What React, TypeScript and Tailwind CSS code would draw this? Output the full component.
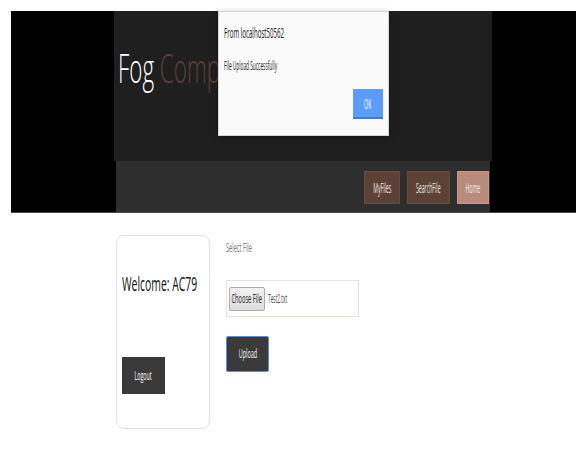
import type { ReactNode } from "react";

// narrow text helper: the page font is rendered condensed
function Narrow({
  children,
  origin = "left",
  scale = "scale-x-[0.45]",
}: {
  children: ReactNode;
  origin?: "left" | "center";
  scale?: string;
}) {
  return (
    <span
      className={`inline-block whitespace-nowrap ${scale} ${
        origin === "left" ? "origin-left" : "origin-center"
      }`}
    >
      {children}
    </span>
  );
}

function NavButton({ label, width, light }: { label: string; width: string; light?: boolean }) {
  return (
    <button
      className={`${width} h-[33px] flex items-center justify-center border text-[14px] text-[#f1e6e2] ${
        light ? "bg-[#b98b7f] border-[#c49a8f]" : "bg-[#5c4136] border-[#684a3e]"
      }`}
    >
      <Narrow origin="center" scale="scale-x-[0.37]">
        {label}
      </Narrow>
    </button>
  );
}

export default function App() {
  return (
    <div className="relative min-h-[452px] bg-white font-['Open_Sans',sans-serif] overflow-hidden">
      {/* header band */}
      <div className="pt-[11px] pl-[11px]">
        <div className="h-[202px] bg-black border-b border-[#4a4a4a] pl-[103px]">
          <div className="w-[378px]">
            <div className="h-[150px] bg-[#1f1f1f] pl-[4px] pt-[37px] overflow-hidden">
              <div className="text-[40px] leading-none font-light">
                <Narrow scale="scale-x-[0.56]">
                  <span className="text-white">Fog </span>
                  <span className="text-[#5c4136]">Computing</span>
                </Narrow>
              </div>
            </div>
            <div className="mx-[2px] h-[51px] bg-[#2e2e2e] flex justify-end items-start gap-[7px] pt-[10px] pr-[1px]">
              <NavButton label="MyFiles" width="w-[36px]" />
              <NavButton label="SearchFile" width="w-[43px]" />
              <NavButton label="Home" width="w-[32px]" light />
            </div>
          </div>
        </div>
      </div>

      {/* content */}
      <div className="flex gap-4 pl-[116px] pt-[22px]">
        <div className="w-[94px] h-[194px] rounded-lg border border-[#e3e3e3] pl-[5px] pt-[36px]">
          <div className="text-[20px] leading-6 text-[#111]">
            <Narrow scale="scale-x-[0.52]">Welcome: AC79</Narrow>
          </div>
          <button className="mt-[61px] w-[43px] h-[37px] bg-[#3a3a3a] text-white text-[13px] flex items-center justify-center">
            <Narrow origin="center" scale="scale-x-[0.41]">
              Logout
            </Narrow>
          </button>
        </div>

        <div className="pt-[5px]">
          <div className="text-[12px] leading-4 text-[#777]">
            <Narrow scale="scale-x-[0.47]">Select File</Narrow>
          </div>
          <div className="mt-[24px] w-[133px] h-[37px] border border-[#e6e4da] flex items-center pl-[2px] gap-[3px]">
            <span className="w-[36px] h-[24px] rounded-[2px] border border-[#acacac] bg-gradient-to-b from-[#f2f2f2] to-[#dcdcdc] text-[13px] text-[#222] flex items-center justify-center">
              <Narrow origin="center" scale="scale-x-[0.44]">
                Choose File
              </Narrow>
            </span>
            <span className="text-[12px] text-[#444]">
              <Narrow scale="scale-x-[0.4]">Test2.txt</Narrow>
            </span>
          </div>
          <button className="mt-[19px] w-[43px] h-[36px] rounded-[2px] bg-[#3a3a3a] border border-[#5b8ad6] text-white text-[13px] flex items-center justify-center">
            <Narrow origin="center" scale="scale-x-[0.42]">
              Upload
            </Narrow>
          </button>
        </div>
      </div>

      {/* alert dialog */}
      <div className="absolute left-[218px] top-[11px] w-[171px] h-[125px] bg-[#fafafa] border border-[#d6d6d6] shadow-[0_2px_6px_rgba(0,0,0,0.35)] flex flex-col pl-[5px] pr-[5px] pt-[11px] pb-[16px]">
        <div className="text-[14px] leading-[20px] text-[#222] overflow-hidden">
          <Narrow scale="scale-x-[0.44]">From localhost50562</Narrow>
        </div>
        <div className="mt-[15px] text-[12px] leading-[16px] text-[#222] overflow-hidden">
          <Narrow scale="scale-x-[0.4]">File Upload Successfully</Narrow>
        </div>
        <div className="mt-auto flex justify-end">
          <button className="w-[30px] h-[30px] bg-[#5b9cfd] border-b-2 border-[#3f7ed8] text-white text-[14px] flex items-center justify-center">
            <Narrow origin="center" scale="scale-x-[0.38]">
              OK
            </Narrow>
          </button>
        </div>
      </div>
    </div>
  );
}
